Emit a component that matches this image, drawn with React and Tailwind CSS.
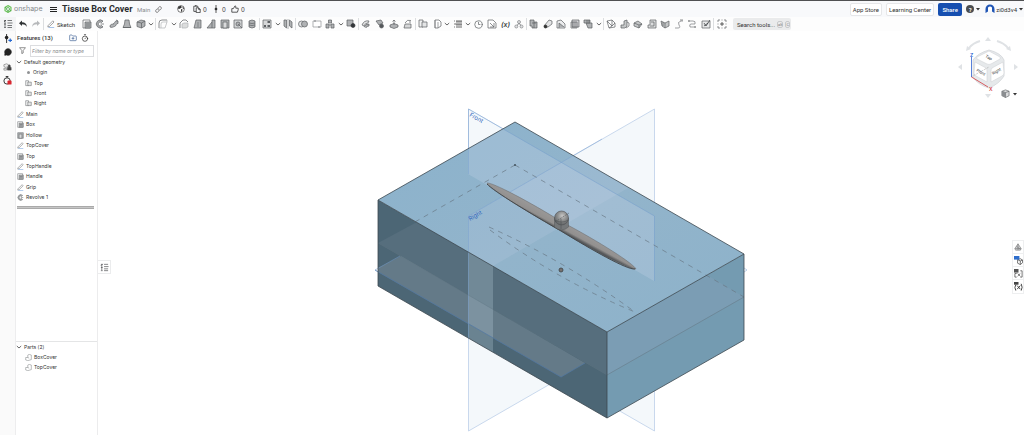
import { Clock3, FolderPlus, Link, MessageCircle, Timer } from 'lucide-react'

const G = '#b0b2b4'
const D = '#5d6063'

// every glyph is drawn on a 10x10 grid: [path, fill, stroke]
const GLYPHS = {
	tree: [['M1 1.500h2M1 5h2M1 8.500h2M4.500 1.500H9M4.500 4h5M4.500 6.500H9M4.500 8.500H9M2 2v6M1 3l2-2', 'none', '#3f4245']],
	undo: [['M1 4.200L4 1.600v1.700c3 0 4.800 1.500 4.800 4.700C7.800 6 6.500 5.300 4 5.300V7z', '#2f3234', 'none']],
	redo: [['M9 4.200L6 1.600v1.700c-3 0-4.800 1.500-4.800 4.700C2.200 6 3.500 5.300 6 5.300V7z', '#b6b8ba', 'none']],
	pencil: [
		['M1.500 6.800L7.300 1l1.500 1.500L3 8.200l-2 .5z', '#fff', D],
		['M2 9.400h7', 'none', '#5b8fd6'],
	],
	extrude: [
		['M1 1h7v8H1z', '#fff', D],
		['M3 3h6v6H3z', G, D],
		['M4 5h4M4 7h4', 'none', D],
	],
	revolve: [
		['M8 2A4 4 0 1 0 8 8L6.500 6.500A2 2 0 1 1 6.500 3.500z', G, D],
		['M5.500 5H9', 'none', D],
	],
	sweep: [
		['M1 8C1 4 4 6 5 4.500S6 1.500 9 2v2.500C7 4 7.500 7 5.500 7.500S3 9 1 8z', G, D],
		['M7 1l2 1', 'none', D],
	],
	loft: [['M3 1h4l.5 4L9 8.500H1L2.500 5z', G, D], ['M1 8.500h8', 'none', D]],
	thicken: [['M1 3l4-2 4 1v5L5.500 9 1 7.500z', G, D], ['M1 3l4.500 1L9 2M5.500 4v5', 'none', D]],
	fillet: [['M1 9V4q0-3 3-3h5', 'none', D], ['M3 9V5q0-2 2-2h4', 'none', '#b5b7b9'], ['M9 1v2L7 9H1', 'none', G]],
	chamfer: [['M1 9V4l3-3h3l2 2', 'none', D], ['M3 9V5l2-1h4v4L7 9z', '#dcdddd', G]],
	draft: [['M3 1h5v8H1z', G, D], ['M5 3v5', 'none', '#6e7174']],
	rib: [['M1 9l5-6V1h3v8z', G, D], ['M6 3v6', 'none', D]],
	shell: [['M1 1h8v8H1z', G, D], ['M3 3h4v6H3z', '#d9dadb', D]],
	hole: [['M1 1h8v8H1z', '#d1d3d4', D], ['M3 5a2 2 0 1 0 4 0 2 2 0 1 0-4 0M5 5l4 4', G, D]],
	thread: [['M2 2q3-2 6 0v6q-3 2-6 0z', G, D], ['M2 4q3 1 6 0M2 6q3 1 6 0', 'none', D]],
	pattern: [['M1 1h8v8H1z', '#d6d7d8', D], ['M2 6h2v2H2zM5.500 6H8v2H5.500zM5.500 2H8v2H5.500z', D, 'none']],
	mirror: [['M1 1h2.500v8L1 7zM9 3L6.500 1v6L9 9z', G, D], ['M5 0v10', 'none', '#8b8e90']],
	boolean: [['M0.500 5a3 3 0 1 0 6 0 3 3 0 1 0-6 0', '#e2e3e4', D], ['M3.500 5a3 3 0 1 0 6 0 3 3 0 1 0-6 0', G, D]],
	split: [['M1 2h8v6H1z', '#fff', '#8f9295'], ['M3 1v2M7 7v2', 'none', D]],
	transform: [['M1 5h3v4H1zM6 5h3v4H6zM3.500 1h3v3h-3z', G, D], ['M4 6h2', 'none', D]],
	deletePart: [['M1 1h6v6H1z', G, D], ['M5 6.500a2 2 0 1 0 4 0 2 2 0 1 0-4 0', '#34373a', '#34373a']],
	face: [['M1 6q2-5 7-4L7 4q-3 0-4 3z', '#e1e2e3', D], ['M3 8q1-3 5-3v2q-3 0-3 2', G, D]],
	deleteFace: [['M1 2l5-1 2 3-4 2z', G, D], ['M4.500 7a2 2 0 1 0 4 0 2 2 0 1 0-4 0', '#54575a', D]],
	moveFace: [['M1 6l4-1.500L9 6v2L5 9.500 1 8z', G, D], ['M5 6V1M3.500 2.500L5 1l1.500 1.500', 'none', D]],
	replaceFace: [['M2 5h6v4H1z', '#d6d7d8', D], ['M2 4q2-4 6-2.500M6 3h2', 'none', D]],
	plane: [['M1 1h4v7H1z', '#f1f2f2', D], ['M4 3h5v5H4z', '#e4e5e6', D]],
	helix: [['M3 1h4l2 2v4L6 9H3z', '#fff', D], ['M3 1v8M6 3v6', 'none', '#797c7f']],
	lines: [['M3 2h6M2 5h7M3 8h6', 'none', '#222'], ['M1 2h1M1 5h1M1 8h1M3 3h6M3 6h6', 'none', '#444']],
	importDoc: [['M1 1h5l3 3v5H1z', '#fff', D], ['M3 4l4 4M7 4v4H3', 'none', D]],
	config: [['M3.500 3a1.500 1.500 0 1 0 3 0 1.500 1.500 0 1 0-3 0M.8 7.500a1.500 1.500 0 1 0 3 0 1.500 1.500 0 1 0-3 0M6 7.500a1.500 1.500 0 1 0 3 0 1.500 1.500 0 1 0-3 0', '#e0e1e2', '#85888b'], ['M5 4.500L3 6.300M5 4.500l2 1.800', 'none', D]],
	sheet: [['M1 1h4v2h3v6H3V7H1z', G, D], ['M3 4h4M5 3v6', 'none', D]],
	bend: [['M1 7l5-6 3 1v3L5 8H2z', '#e3e4e5', D], ['M1 7.500a1.500 1.500 0 1 0 3 0 1.500 1.500 0 1 0-3 0', '#333', '#333']],
	flange: [['M1 9V2l4-1 4 4v4z', '#ecedee', D], ['M3 9V4l5 4', G, D]],
	tab: [['M2 1h7v7H2z', '#d1d2d4', D], ['M1 3h6v6H1zM3 3v6M5 3v6', 'none', D]],
	corner: [['M1 1h6v3H1zM3 4h6v5H5z', G, D], ['M3 2h4', 'none', D]],
	frame: [['M1 2l5-1 3 3v4L3 9z', '#fff', D], ['M1 2l5 5 3-3M6 1v6L3 9', 'none', D]],
	trim: [['M1 6h3V2l3-1v6L5 9H1z', '#c4c6c7', D], ['M7 3l2 1v3L6 9', 'none', D]],
	gusset: [['M1 4l4-2 4 3-3 4-5-2z', '#c4c6c7', D], ['M1 4l5 2 3-1M6 6v3', 'none', D]],
	endcap: [['M3 1h6v8H1V6h2z', '#dcddde', D], ['M4 3h3v4H3', 'none', D]],
	surface: [['M1 2l4 2 4-2v5L5 9 2 7z', '#c4c6c7', D], ['M5 4v5M3 3v4', 'none', D]],
	curve: [['M1 9h3q3 0 1-3t2-4h2', 'none', '#77797c'], ['M6 1h3', 'none', D]],
	bridge: [['M1 2h5q3 0 2 3H4q-2 0-1 3h6', 'none', '#77797c'], ['M1 2h2M7 8h2', 'none', D]],
	check: [['M1 2h8v7H1z', '#e8e9ea', D], ['M3 4l2 3 4-6M3 7l4-3', 'none', '#303336']],
	add: [['M1 3V1h2M7 1h2v2M9 7v2H7M3 9H1V7M4.500 1h1M4.500 9h1M1 4.500v1M9 4.500v1', 'none', D], ['M5 3v4M3 5h4', 'none', '#222']],
	part: [['M1 5h3V1.500l2-1 3 1V8L4 9.500 1 8.500z', '#fff', '#74777a'], ['M4 5l2 1', 'none', '#74777a']],
	cube: [['M1 2.500L5 1l4 1.500v5L5 9.500 1 7.500z', '#d9dadb', D], ['M1 2.500L5 4l4-1.500M5 4v5.500', 'none', D], ['M1 2.500L5 4v5.500L1 7.500z', '#8b8e91', 'none']],
}

function Glyph({ name, className = 'size-2.5' }) {
	return (
		<svg viewBox="0 0 10 10" className={`${className} shrink-0`} strokeWidth="0.7" aria-hidden="true">
			{GLYPHS[name].map(([d, fill, stroke]) => (
				<path key={d} d={d} fill={fill} stroke={stroke} />
			))}
		</svg>
	)
}

function Caret({ solid }) {
	return (
		<svg viewBox="0 0 6 6" className="size-1.5 shrink-0" aria-hidden="true">
			{solid ? <path d="M1 2h4L3 4.500z" fill="#333" /> : <path d="M.8 2L3 4l2.200-2" fill="none" stroke="#444" strokeWidth="0.8" />}
		</svg>
	)
}

const TOOL_GROUPS = [
	{ width: 'w-[28px]', tools: ['undo', 'redo'] },
	{ width: 'w-[76px]', tools: ['extrude', 'revolve', 'sweep', 'loft', 'thicken', 'v'] },
	{ width: 'w-[104px]', tools: ['fillet', 'v', 'chamfer', 'draft', 'rib', 'shell', 'hole', 'thread'] },
	{ width: 'w-[36px]', tools: ['pattern', 'v', 'mirror'] },
	{ width: 'w-[63px]', tools: ['boolean', 'split', 'transform', 'v', 'deletePart'] },
	{ width: 'w-[57px]', tools: ['face', 'deleteFace', 'moveFace', 'replaceFace'] },
	{ width: 'w-[111px]', tools: ['plane', 'helix', 'v', 'lines', 'v', 'clock', 'importDoc', 'variable', 'config'] },
	{ width: 'w-[77px]', tools: ['sheet', 'bend', 'flange', 'tab', 'corner', 'v'] },
	{ width: 'w-[110px]', tools: ['frame', 'trim', 'gusset', 'endcap', 'surface', 'curve', 'bridge', 'check'] },
]

function Tool({ name }) {
	if (name === 'v') {
		return (
			<button aria-label="More tools" className="shrink-0">
				<Caret />
			</button>
		)
	}
	return (
		<button aria-label={name} className="flex size-3 shrink-0 items-center justify-center">
			{name === 'clock' && <Clock3 className="size-[9px] text-[#66696c]" strokeWidth={2} />}
			{name === 'variable' && <span className="text-[7px] leading-none font-semibold italic text-[#3a3d40]">(x)</span>}
			{name !== 'clock' && name !== 'variable' && <Glyph name={name} />}
		</button>
	)
}

function ToolGroup({ width, tools }) {
	return (
		<div className={`flex h-3 shrink-0 items-center justify-between border-r border-[#dcdee0] px-px ${width}`}>
			{tools.map((t, i) => (
				<Tool key={i} name={t} />
			))}
		</div>
	)
}

function Toolbar() {
	return (
		<div className="flex h-[14px] shrink-0 items-center bg-[#fdfdfd]">
			<button aria-label="Feature list" className="flex h-full w-4 shrink-0 items-center justify-center bg-[#f3f4f5]">
				<Glyph name="tree" />
			</button>
			<ToolGroup {...TOOL_GROUPS[0]} />
			<button className="flex w-9 shrink-0 items-center gap-0.5 pl-[3px] font-['Roboto',sans-serif] text-[6px] text-[#333]">
				<Glyph name="pencil" className="size-2" />
				Sketch
			</button>
			{TOOL_GROUPS.slice(1).map((g) => (
				<ToolGroup key={g.tools[0]} {...g} />
			))}
			<div className="flex w-[19px] shrink-0 pl-0.5">
				<Tool name="add" />
			</div>
			<button className="flex h-3 w-[58px] shrink-0 items-center gap-0.5 rounded-xs bg-[#eaebec] pl-1 font-['Roboto',sans-serif] text-[6px] whitespace-nowrap text-[#333]">
				Search tools...
				<kbd className="rounded-xs border border-[#c8cacc] font-[inherit] text-[4px] leading-[5px] text-[#777]">alt</kbd>
				<kbd className="rounded-xs border border-[#c8cacc] font-[inherit] text-[4px] leading-[5px] text-[#777]">C</kbd>
			</button>
		</div>
	)
}

function Counter({ label, children }) {
	return (
		<button aria-label={label} className="flex w-[19px] items-center gap-0.5 text-[6px] text-[#333]">
			{children}0
		</button>
	)
}

function Header() {
	return (
		<header className="flex h-4 shrink-0 items-center justify-between bg-[#f8f9fb] pl-1">
			<div className="flex items-center">
				<a href="#home" className="flex w-[46px] items-center gap-0.5 text-[7px] text-[#85898c]">
					<svg viewBox="0 0 10 10" className="size-2 shrink-0" aria-hidden="true">
						<path d="M5 .8l3.700 2.100v4.200L5 9.200 1.300 7.100V2.900z" fill="none" stroke="#6cc35a" strokeWidth="1.500" />
						<path d="M5 3l1.700 1v2L5 7 3.300 6V4z" fill="none" stroke="#46a843" strokeWidth="1" />
						<path d="M1.300 2.900L3.300 4M8.700 7.100L6.700 6M5 9.200V7" stroke="#46a843" />
					</svg>
					onshape
				</a>
				<button aria-label="Menu" className="flex w-3 flex-col gap-px">
					<span className="h-px w-[7px] bg-[#222]" />
					<span className="h-px w-[7px] bg-[#222]" />
					<span className="h-px w-[7px] bg-[#222]" />
				</button>
				<h1 className="w-[75px] font-['Roboto',sans-serif] text-[9px] leading-none font-bold whitespace-nowrap text-[#2b2d2f]">Tissue Box Cover</h1>
				<span className="w-[18px] font-['Roboto',sans-serif] text-[6px] text-[#8a8d90]">Main</span>
				<button aria-label="Copy link" className="w-[22px]">
					<Link className="size-[7px] text-[#444]" />
				</button>
				<button aria-label="Public document" className="w-4">
					<svg viewBox="0 0 10 10" className="size-2" aria-hidden="true">
						<circle cx="5" cy="5" r="4.200" fill="#fff" stroke="#333" strokeWidth="0.800" />
						<path d="M2 2l3-1 1 2-2 1.500L2.500 5 1 4zM5 5l2 .5L6 8.500 5 8zM7 2l2 2-1 1-1-1z" fill="#333" />
					</svg>
				</button>
				<Counter label="Copies">
					<svg viewBox="0 0 10 10" className="size-2" aria-hidden="true">
						<path d="M4 8H1V1.500h5V3M2.500.8h2M4 3.500h3L9 5.500v4H4zM7 3.500v2h2" fill="none" stroke="#333" />
					</svg>
				</Counter>
				<Counter label="Versions">
					<svg viewBox="0 0 10 10" className="size-2" aria-hidden="true">
						<path d="M5 0v10" stroke="#333" />
						<circle cx="5" cy="5" r="1.700" fill="#333" />
					</svg>
				</Counter>
				<Counter label="Likes">
					<svg viewBox="0 0 10 10" className="size-2" aria-hidden="true">
						<path d="M1 4.500h2L5 1q1.500 0 1 3h3v2L8 9H1z" fill="none" stroke="#333" />
					</svg>
				</Counter>
			</div>
			<div className="flex items-center gap-1 font-['Roboto',sans-serif] text-[6px] text-[#333]">
				<a href="#store" className="rounded-xs border border-[#e6e7e9] bg-white px-0.5 leading-[11px]">App Store</a>
				<a href="#learning" className="rounded-xs border border-[#e6e7e9] bg-white px-0.5 leading-[11px]">Learning Center</a>
				<button className="h-[13px] w-6 rounded-xs bg-[#164fb0] font-medium text-white">Share</button>
				<button aria-label="Help" className="flex items-center gap-px">
					<span className="flex size-2 items-center justify-center rounded-full bg-[#4a4d50] text-[6px] font-bold text-white">?</span>
					<Caret solid />
				</button>
				<button className="flex items-center gap-px">
					<svg viewBox="0 0 10 10" className="size-[10px]" aria-hidden="true">
						<path d="M.5 9V5a4.500 4.500 0 0 1 9 0v4L7 7.500V4.500a2 2 0 0 0-4 0v3z" fill="#1f55b5" />
						<circle cx="5" cy="4.800" r="2" fill="#fff" />
					</svg>
					zi0d3v4
					<Caret solid />
				</button>
			</div>
		</header>
	)
}

function Rail() {
	return (
		<nav className="flex w-4 shrink-0 flex-col items-center gap-1 border-r border-[#ededee] bg-[#fafafa] pt-[3px]">
			<button aria-label="Insert" className="flex h-[10px]">
				<svg viewBox="0 0 10 10" className="size-[9px]" aria-hidden="true">
					<path d="M4 0v10" stroke="#222" />
					<circle cx="4" cy="4" r="2" fill="#222" />
					<path d="M6 7h4M8 5v4" stroke="#2467cf" strokeWidth="1.300" />
				</svg>
			</button>
			<button aria-label="Comments" className="flex h-[10px]">
				<MessageCircle className="size-2 text-[#222]" fill="#222" />
			</button>
			<button aria-label="Integrations" className="flex h-[10px]">
				<svg viewBox="0 0 10 10" className="size-[9px]" aria-hidden="true">
					<path d="M1 3l3-1 2 1v2L3 6 1 5zM1 7h3v2H1z" fill="#eee" stroke="#777" strokeWidth="0.700" />
					<path d="M5 6h4v3H5zM6 6V4q1-2 2 0v2" fill="#444" stroke="#444" strokeWidth="0.700" />
				</svg>
			</button>
			<button aria-label="Errors" className="flex h-[10px]">
				<svg viewBox="0 0 10 10" className="size-[9px]" aria-hidden="true">
					<circle cx="4.500" cy="5.500" r="3.500" fill="none" stroke="#222" />
					<path d="M4.500 2V.5M3 .5h3" stroke="#222" />
					<rect x="5" y="5" width="4.500" height="4.500" rx="1" fill="#d9262f" />
				</svg>
			</button>
		</nav>
	)
}

const GEOMETRY = [
	['dot', 'Origin'],
	['plane', 'Top'],
	['plane', 'Front'],
	['plane', 'Right'],
]

const FEATURES = [
	['pencil', 'Main'],
	['extrude', 'Box'],
	['shell', 'Hollow'],
	['pencil', 'TopCover'],
	['extrude', 'Top'],
	['pencil', 'TopHandle'],
	['extrude', 'Handle'],
	['pencil', 'Grip'],
	['revolve', 'Revolve 1'],
]

function Row({ icon, name, nested }) {
	return (
		<li className={`flex items-center gap-0.5 ${nested ? 'pl-[9px]' : 'pl-px'}`}>
			{icon === 'dot' ? (
				<span className="flex w-[6px] justify-center">
					<span className="size-[3px] rounded-full bg-[#909294]" />
				</span>
			) : (
				<Glyph name={icon} className="size-[7px]" />
			)}
			{name}
		</li>
	)
}

function FeaturePanel() {
	return (
		<aside className="flex w-[82px] shrink-0 flex-col border-r border-[#ececed] bg-white text-[#333]">
			<div className="flex h-[13px] items-center justify-between pr-2 pl-px font-['Roboto',sans-serif] text-[6px]">
				<h2 className="font-medium">Features (13)</h2>
				<div className="flex gap-1">
					<button aria-label="New folder">
						<FolderPlus className="size-2 text-[#3c5f94]" />
					</button>
					<button aria-label="Rebuild times">
						<Timer className="size-2 text-[#222]" />
					</button>
				</div>
			</div>
			<div className="flex h-[13px] items-center gap-1 pr-[3px] pl-[3px]">
				<svg viewBox="0 0 10 10" className="size-[7px] shrink-0" aria-hidden="true">
					<path d="M.8 1h8.400L6 5v3.500L4 9.500V5z" fill="none" stroke="#666" />
				</svg>
				<input
					aria-label="Filter by name or type"
					placeholder="Filter by name or type"
					className="h-3 w-full min-w-0 border border-[#dcdde0] px-px text-[5px] italic placeholder:text-[#85888b]"
				/>
			</div>
			<ul className="grid h-[146px] shrink-0 auto-rows-fr text-[5px] leading-none">
				<li className="flex items-center gap-0.5">
					<Caret />
					Default geometry
				</li>
				{GEOMETRY.map(([icon, name]) => (
					<Row key={name} icon={icon} name={name} nested />
				))}
				{FEATURES.map(([icon, name]) => (
					<Row key={name} icon={icon} name={name} />
				))}
			</ul>
			<div className="mt-[3px] mr-[3px] ml-px h-[3px] shrink-0 border-y border-[#aaa] bg-[#c6c6c6]" />
			<section className="mt-auto h-[94px] border-t border-[#e4e5e6] text-[5px] leading-none">
				<h2 className="flex h-[10px] items-center gap-0.5">
					<Caret />
					Parts (2)
				</h2>
				<ul className="grid h-[21px] auto-rows-fr">
					<Row icon="part" name="BoxCover" nested />
					<Row icon="part" name="TopCover" nested />
				</ul>
			</section>
		</aside>
	)
}

function Model() {
	return (
		<svg viewBox="374 107 374 328" className="h-[328px] w-[374px] shrink-0" strokeWidth="0.800" role="img" aria-label="Tissue box cover">
			<defs>
				<linearGradient id="top" x1="0" y1="0" x2="1" y2="1">
					<stop offset="0" stopColor="#8bb2cc" />
					<stop offset="0.500" stopColor="#92b4cb" />
					<stop offset="1" stopColor="#8db2ca" />
				</linearGradient>
				<linearGradient id="blade" x1="564" y1="220" x2="558" y2="231" gradientUnits="userSpaceOnUse">
					<stop offset="0" stopColor="#9b9a9a" />
					<stop offset="0.650" stopColor="#92908f" />
					<stop offset="0.850" stopColor="#5a5c5e" />
					<stop offset="1" stopColor="#4a4c4e" />
				</linearGradient>
				<radialGradient id="dome" cx="0.550" cy="0.350" r="0.650">
					<stop offset="0" stopColor="#c7c7c6" />
					<stop offset="0.500" stopColor="#8e8f8f" />
					<stop offset="1" stopColor="#606365" />
				</radialGradient>
				<clipPath id="topClip">
					<path d="M378 200L515 122L744 254L607 332z" />
				</clipPath>
			</defs>

			{/* planes behind the box */}
			<g fill="#f4f8fb" stroke="#bccfe8">
				<path d="M468.500 109L654.500 216V431L468.500 324z" />
				<path d="M468.500 216L654.500 109V324L468.500 431z" />
			</g>

			<path d="M378 200L607 332V418L378 286z" fill="#4c6675" />
			<path d="M417 222L607 332V375L378 243z" fill="#566e7d" />
			<path d="M607 332L744 254V340L607 418z" fill="#749bb1" />
			<path d="M607 332L707 275L744 297L607 375z" fill="#7b9db4" />
			<path d="M378 200L515 122L744 254L607 332z" fill="url(#top)" />

			{/* plane areas in front of the box */}
			<g clipPath="url(#topClip)">
				<path d="M468 109L654 216V281L468 174z" fill="#d5def0" fillOpacity="0.220" />
				<path d="M468 216L654 109V173L493 266L468 281z" fill="#d5def0" fillOpacity="0.140" />
			</g>
			<path d="M378 268L401 256L585 363L561 377L378 272z" fill="#aab9c2" fillOpacity="0.250" />
			<path d="M468 252L493 266V352L468 338z" fill="#c5dbe6" fillOpacity="0.250" />
			<g fill="none" stroke="#759fcf" strokeOpacity="0.600">
				<path d="M375 270L561 377L585 363" stroke="#5278a3" strokeOpacity="0.900" />
				<path d="M400 256L375 270L378 272M744 268L747 270L744 272" />
				<path d="M468.500 174V109L654.500 216V281" />
				<path d="M468.500 338V216L602 139" />
			</g>

			<g fill="none" stroke="#697985" strokeWidth="0.700">
				<path d="M378 243L607 375" strokeOpacity="0.400" />
				<path d="M607 375L744 297" stroke="#69808e" />
				<g strokeDasharray="5 5">
					<path d="M515 165L378 243" clipPath="url(#topClip)" />
					<path d="M515 165L744 297" />
					<path d="M489 227Q565 261 635 312" />
					<path d="M490 230Q557 280 635 312" />
				</g>
			</g>
			<circle cx="515" cy="165" r="1" fill="#43535f" />
			<g fill="none" stroke="#3c474f" strokeLinejoin="round">
				<path d="M378 200L515 122L744 254L607 332z" />
				<path d="M378 200V286L607 418L744 340V254M607 332V418" />
			</g>

			{/* handle */}
			<path d="M487 183C492 182 530 202 562 222C600 242 634 264 636 269C629 270 592 250 561 231C533 215 491 190 487 183z" fill="url(#blade)" stroke="#66696b" strokeWidth="0.500" />
			<path d="M487 184C493 191 533 215 561 231C592 250 627 270 635 269" fill="none" stroke="#3f4244" strokeWidth="0.900" />
			<path d="M554.500 218v9q7 6 14 0v-9z" fill="#747779" stroke="#55585a" strokeWidth="0.500" />
			<circle cx="561.500" cy="218" r="7" fill="url(#dome)" stroke="#505355" strokeWidth="0.600" />
			<path d="M554.500 220q7 4 14 0M561 219v10" fill="none" stroke="#4b4e50" strokeWidth="0.500" />
			<path d="M555 222l14-9" stroke="#4b4e50" strokeWidth="0.500" strokeDasharray="2 1" />
			<circle cx="561" cy="270" r="2" fill="#77716f" stroke="#3d4245" />

			<g fill="#3468bd" fontSize="6">
				<text transform="translate(469 116) rotate(30)">Front</text>
				<text transform="translate(470 221) rotate(-30)">Right</text>
			</g>
		</svg>
	)
}

function ViewCube() {
	return (
		<svg viewBox="958 36 62 62" className="h-[62px] w-[62px]" role="img" aria-label="View cube">
			<g fill="#dfe2e5">
				<path d="M988 37l3 4h-6zM988 98l3-4h-6zM958 67l4-3v6zM1018 67l-4-3v6z" />
				<path d="M966 51l1-5 4 3zM1011 51l-1-5-4 3z" />
			</g>
			<path d="M969 48Q973 43 980 41M1008 48Q1004 43 997 41" fill="none" stroke="#dfe2e5" strokeWidth="2" />
			<path d="M989 50Q1001 53 1004 60V76Q999 84 989 88Q978 85 973 77V60Q978 53 989 50z" fill="#e6e9eb" stroke="#d3d6d9" strokeWidth="0.800" />
			<g fill="#fff" stroke="#d1d4d7" strokeWidth="0.600" strokeLinejoin="round">
				<path d="M989 51L1000 57Q1001 58 1000 59L991 64Q989 65 987 64L977 59Q976 58 977 57z" />
				<path d="M975 62L986 68Q987 69 987 71V82L976 76Q974 75 974 73z" />
				<path d="M1003 62L992 68Q991 69 991 71V82L1002 76Q1004 75 1004 73z" />
			</g>
			<path d="M971 77L989 67" stroke="#999" strokeWidth="0.500" strokeDasharray="2 1" />
			<path d="M971.500 77V57" stroke="#2d5fd0" strokeWidth="0.800" />
			<path d="M971.500 77L988 87" stroke="#d23a3f" strokeWidth="0.800" />
			<g fontSize="5" fontWeight="600">
				<text x="970" y="57" fill="#2d5fd0">Z</text>
				<text x="989" y="91" fill="#d23a3f">X</text>
			</g>
			<g fontSize="4" fill="#333">
				<text transform="translate(985 57) rotate(30)">Top</text>
				<text transform="translate(976 71) rotate(30)">Front</text>
				<text transform="translate(993 75) rotate(-30)">Right</text>
			</g>
		</svg>
	)
}

function SideTabs() {
	return (
		<div className="absolute top-[209px] right-0 flex w-3 flex-col divide-y divide-[#eeeff0] border border-[#eeeff0] bg-white">
			<button aria-label="Appearance" className="flex h-[13px] items-center justify-center">
				<svg viewBox="0 0 10 10" className="size-2" aria-hidden="true">
					<path d="M1 7l4-6 4 6-1 2H2zM3 4l5 4M5 1v8M1 7h8" fill="#cbcdcf" stroke="#666" strokeWidth="0.600" />
				</svg>
			</button>
			<button aria-label="Configurations" className="flex h-[13px] items-center justify-center">
				<svg viewBox="0 0 10 10" className="size-[9px]" aria-hidden="true">
					<path d="M4 4l3-1 2.500 1.500v3L7 9.500 4 8zM4 4l3 1.500 2.500-1M7 5.500v4" fill="#fff" stroke="#444" strokeWidth="0.800" />
					<path d="M0 0h6v4H0z" fill="#2d6dcc" />
				</svg>
			</button>
			<button aria-label="Custom tables" className="flex h-[13px] items-center justify-center">
				<svg viewBox="0 0 10 10" className="size-[9px]" aria-hidden="true">
					<path d="M0 0h5v4H0z" fill="#555" />
					<path d="M3 5H1v4h2M7 2h2v7H7M4 5l3 3M7 5L4 8" fill="none" stroke="#444" strokeWidth="0.800" />
				</svg>
			</button>
			<button aria-label="Variables" className="flex h-[13px] items-center justify-center">
				<svg viewBox="0 0 10 10" className="size-[9px]" aria-hidden="true">
					<path d="M0 0h5v3H0z" fill="#444" />
					<path d="M2 3Q0 6 2 9.500M8 2q2 4 0 7.500M3.500 4l3.500 4M7 4L3.500 8" fill="none" stroke="#333" />
				</svg>
			</button>
		</div>
	)
}

export default function App() {
	return (
		<div className="flex h-screen flex-col overflow-hidden border-t border-[#4f5052] bg-white font-['Inter','Liberation_Sans',sans-serif]">
			<Header />
			<Toolbar />
			<div className="flex min-h-0 flex-1">
				<Rail />
				<FeaturePanel />
				<main className="relative flex min-w-0 flex-1 items-start justify-center pt-[76px]">
					<Model />
					<button aria-label="Feature list panel" className="absolute top-[229px] left-0 flex h-[14px] w-[13px] items-center justify-center border border-l-0 border-[#ebeced] bg-white">
						<Glyph name="tree" className="size-[9px]" />
					</button>
					<div className="absolute top-[5px] right-1">
						<ViewCube />
					</div>
					<button aria-label="Render mode" className="absolute top-[58px] right-1.5 flex items-center gap-0.5">
						<Glyph name="cube" className="size-[9px]" />
						<Caret solid />
					</button>
					<SideTabs />
				</main>
			</div>
		</div>
	)
}
